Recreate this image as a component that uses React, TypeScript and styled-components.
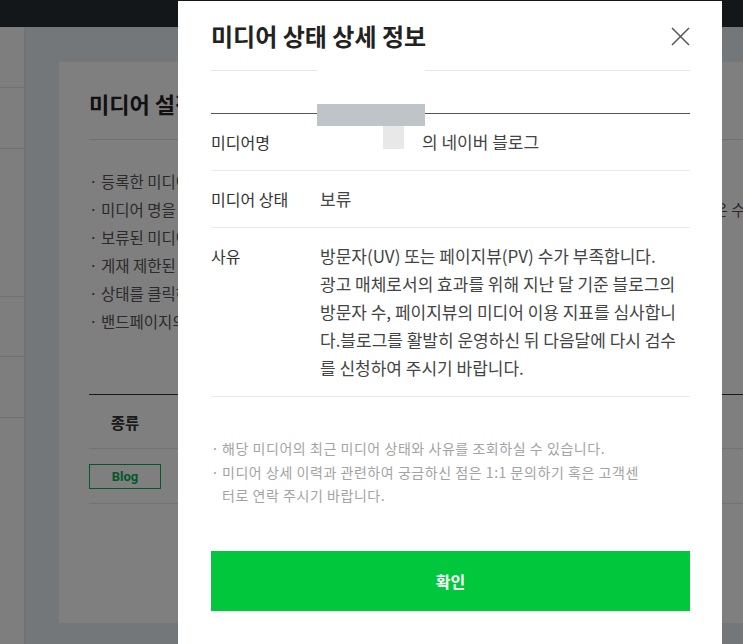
import React from 'react';
import styled, { createGlobalStyle } from 'styled-components';

const GlobalStyle = createGlobalStyle`
  html, body {
    margin: 0;
    padding: 0;
  }
  body {
    font-family: "Noto Sans CJK KR", "Noto Sans", sans-serif;
    overflow: hidden;
  }
  * {
    box-sizing: border-box;
  }
`;

const Page = styled.div`
  position: relative;
  height: 644px;
  display: flex;
  flex-direction: column;
  background: #e6eef3;
  overflow: hidden;
`;

const TopBar = styled.div`
  height: 27px;
  flex: none;
  background: #262e33;
`;

const Main = styled.div`
  flex: 1;
  display: flex;
  min-height: 0;
`;

const Sidebar = styled.div`
  width: 25px;
  flex: none;
  display: flex;
  flex-direction: column;
  background: #fcfcfc;
  border-right: 1px solid #dce2e6;
`;

const SideItem = styled.div<{ h: number }>`
  height: ${props => props.h}px;
  flex: none;
  border-bottom: 1px solid #e3e3e3;
`;

const Workspace = styled.div`
  flex: 1;
  min-width: 0;
  padding: 35px 0 21px 34px;
  overflow: hidden;
`;

const Card = styled.div`
  width: 900px;
  height: 100%;
  padding: 0 30px;
  background: #fff;
`;

const CardTitle = styled.h2`
  margin: 0;
  padding: 28px 0 23px;
  font-size: 22px;
  line-height: 26px;
  font-weight: 700;
  color: #222;
  border-bottom: 1px solid #dedede;
`;

const GuideList = styled.ul`
  margin: 27px 0 0;
  padding: 0;
  list-style: none;
`;

const GuideItem = styled.li`
  display: flex;
  font-size: 15.5px;
  line-height: 28px;
  color: #555;
  white-space: nowrap;

  &::before {
    content: '·';
    width: 12px;
    flex: none;
  }
`;

const MediaTable = styled.table`
  width: 100%;
  margin-top: 59px;
  border-collapse: collapse;
  border-top: 1px solid #333;
`;

const Th = styled.th<{ narrow?: boolean }>`
  width: ${props => props.narrow ? '72px' : 'auto'};
  height: 54px;
  padding: 0;
  font-size: 15.5px;
  font-weight: 700;
  color: #333;
  text-align: center;
  border-bottom: 1px solid #e5e5e5;
`;

const Td = styled.td`
  height: 55px;
  padding: 0;
  border-bottom: 1px solid #e5e5e5;
`;

const TypeBadge = styled.span`
  display: flex;
  align-items: center;
  justify-content: center;
  width: 72px;
  height: 25px;
  border: 1px solid #03b050;
  font-family: Roboto, "Liberation Sans", sans-serif;
  font-size: 13px;
  font-weight: 700;
  color: #03b050;
`;

const Dim = styled.div`
  position: absolute;
  inset: 0;
  background: rgba(0, 0, 0, 0.5);
`;

const Dialog = styled.div`
  position: absolute;
  top: 1px;
  left: 178px;
  width: 544px;
  height: 700px;
  padding: 0 32px 0 33px;
  background: #fff;
`;

const DialogHeader = styled.div`
  height: 70px;
  display: flex;
  align-items: center;
  justify-content: space-between;
  border-bottom: 1px solid #e6e6e6;
`;

const DialogTitle = styled.h3`
  margin: 0;
  font-size: 24px;
  font-weight: 600;
  color: #222;
`;

const CloseButton = styled.button`
  width: 20px;
  height: 20px;
  margin: 2px 0 0;
  padding: 0;
  border: 0;
  background: none;
  display: flex;
  align-items: center;
  justify-content: center;
  cursor: pointer;
`;

const InfoTable = styled.div`
  margin-top: 42px;
  border-top: 1px solid #555;
`;

const InfoRow = styled.div`
  display: grid;
  grid-template-columns: 109px 1fr;
  padding: 14px 0;
  border-bottom: 1px solid #ebebeb;
  line-height: 28px;
`;

const Label = styled.div`
  font-size: 16px;
  color: #333;
`;

const Value = styled.div`
  font-size: 17px;
  color: #444;
  word-break: break-all;
`;

const MaskedName = styled.span`
  display: inline-block;
  width: 102px;
`;

const Notes = styled.ul`
  width: 437px;
  margin: 40px 0 0;
  padding: 0;
  list-style: none;
`;

const Note = styled.li`
  display: flex;
  font-size: 14px;
  line-height: 23.5px;
  letter-spacing: 0.55px;
  color: #a3a3a3;
  word-break: break-all;

  &::before {
    content: '·';
    width: 11px;
    flex: none;
  }
`;

const ConfirmButton = styled.button`
  display: block;
  width: 100%;
  height: 60px;
  margin-top: 43px;
  border: 0;
  background: #00c73c;
  font-family: inherit;
  font-size: 16px;
  font-weight: 700;
  color: #fff;
  cursor: pointer;
`;

const Redaction = styled.div<{ tone: string }>`
  position: absolute;
  background: ${props => props.tone};
`;

const guides = [
  '등록한 미디어의 상태를 확인하고 관리할 수 있습니다.',
  '미디어 명을 클릭하면 미디어 정보를 수정할 수 있으며, 단 한 번 등록하신 미디어의 광고 노출 유형은 수정할 수 없습니다.',
  '보류된 미디어는 사유를 확인하신 후 재검수를 요청해 주세요.',
  '게재 제한된 미디어에는 광고가 노출되지 않습니다.',
  '상태를 클릭하면 상세 정보를 볼 수 있습니다.',
  '밴드페이지의 경우 별도 안내를 따릅니다.',
];

const CloseIcon = () => (
  <svg width='19' height='19' viewBox='0 0 19 19'>
    <path d='M1 1L18 18M18 1L1 18' stroke='#555' strokeWidth='1.5' fill='none' />
  </svg>
);

const App = () => {
  return (
    <Page>
      <GlobalStyle />
      <TopBar />
      <Main>
        <Sidebar>
          <SideItem h={61} />
          <SideItem h={61} />
          <SideItem h={148} />
          <SideItem h={60} />
          <SideItem h={61} />
        </Sidebar>
        <Workspace>
          <Card>
            <CardTitle>미디어 설정 관리</CardTitle>
            <GuideList>
              {guides.map(text => <GuideItem key={text}>{text}</GuideItem>)}
            </GuideList>
            <MediaTable>
              <thead>
                <tr>
                  <Th narrow>종류</Th>
                  <Th />
                </tr>
              </thead>
              <tbody>
                <tr>
                  <Td><TypeBadge>Blog</TypeBadge></Td>
                  <Td />
                </tr>
              </tbody>
            </MediaTable>
          </Card>
        </Workspace>
      </Main>
      <Dim />
      <Dialog>
        <DialogHeader>
          <DialogTitle>미디어 상태 상세 정보</DialogTitle>
          <CloseButton aria-label='닫기'><CloseIcon /></CloseButton>
        </DialogHeader>
        <InfoTable>
          <InfoRow>
            <Label>미디어명</Label>
            <Value><MaskedName />의 네이버 블로그</Value>
          </InfoRow>
          <InfoRow>
            <Label>미디어 상태</Label>
            <Value>보류</Value>
          </InfoRow>
          <InfoRow>
            <Label>사유</Label>
            <Value>
              방문자(UV) 또는 페이지뷰(PV) 수가 부족합니다.<br />
              광고 매체로서의 효과를 위해 지난 달 기준 블로그의<br />
              방문자 수, 페이지뷰의 미디어 이용 지표를 심사합니<br />
              다.블로그를 활발히 운영하신 뒤 다음달에 다시 검수<br />
              를 신청하여 주시기 바랍니다.
            </Value>
          </InfoRow>
        </InfoTable>
        <Notes>
          <Note>해당 미디어의 최근 미디어 상태와 사유를 조회하실 수 있습니다.</Note>
          <Note>미디어 상세 이력과 관련하여 궁금하신 점은 1:1 문의하기 혹은 고객센터로 연락 주시기 바랍니다.</Note>
        </Notes>
        <ConfirmButton>확인</ConfirmButton>
        <Redaction tone='#fff' style={{ left: 139, top: 57, width: 108, height: 26 }} />
        <Redaction tone='#bfc4c8' style={{ left: 139, top: 103, width: 108, height: 22 }} />
        <Redaction tone='#e8e8e8' style={{ left: 205, top: 125, width: 21, height: 23 }} />
      </Dialog>
    </Page>
  );
};

export default App;
